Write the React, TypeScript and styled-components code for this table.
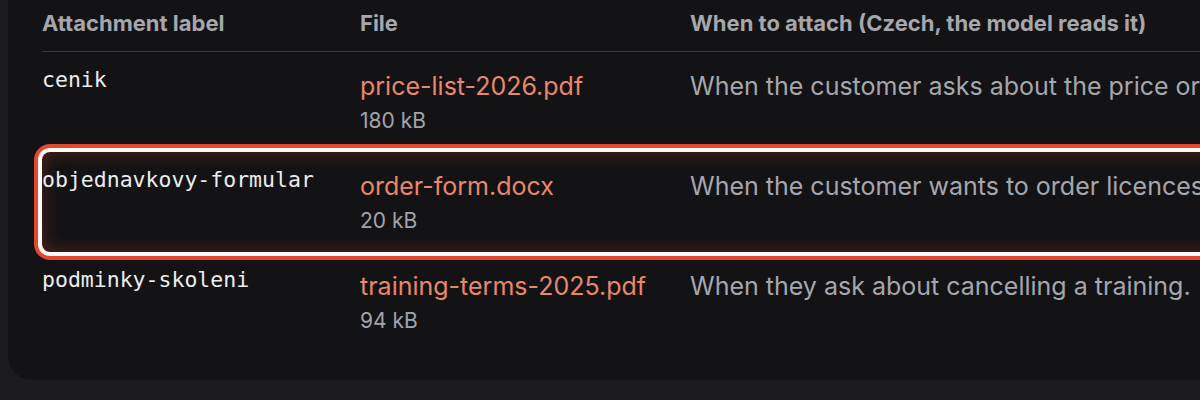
import React from "react"
import styled, { createGlobalStyle } from "styled-components"

interface Attachment {
  label: string
  file: string
  size: string
  when: string
  active?: boolean
}

const attachments: Attachment[] = [
  {
    label: "cenik",
    file: "price-list-2026.pdf",
    size: "180 kB",
    when: "When the customer asks about the price or the price list.",
  },
  {
    label: "objednavkovy-formular",
    file: "order-form.docx",
    size: "20 kB",
    when: "When the customer wants to order licences.",
    active: true,
  },
  {
    label: "podminky-skoleni",
    file: "training-terms-2025.pdf",
    size: "94 kB",
    when: "When they ask about cancelling a training.",
  },
]

const GlobalStyle = createGlobalStyle`
  html, body {
    margin: 0;
    padding: 0;
    background: #1c1c1f;
    overflow: hidden;
  }
  body {
    font-family: Inter, "Noto Sans", sans-serif;
  }
`

const Page = styled.div`
  width: 1200px;
  height: 400px;
  overflow: hidden;
  padding-left: 8px;
  box-sizing: border-box;
`

const Card = styled.div`
  width: 1400px;
  height: 380px;
  background: #131315;
  border-radius: 0 0 0 24px;
  padding: 0 0 0 34px;
  box-sizing: border-box;
`

const Row = styled.div<{ $active?: boolean }>`
  display: grid;
  grid-template-columns: 318px 330px 1fr;
  align-items: start;
  padding: 18px 0 14px;
  border-radius: 8px;
  ${({ $active }) =>
    $active &&
    `
    box-shadow:
      0 0 0 4px #fdfbfa,
      0 0 0 8px #e2492f,
      inset 0 0 18px rgba(226, 73, 47, 0.32);
  `}
`

const HeadRow = styled(Row)`
  padding: 10px 0 15px;
  border-bottom: 1px solid #38383c;
  border-radius: 0;
`

const HeadCell = styled.div`
  font-size: 22px;
  line-height: 26px;
  font-weight: 700;
  color: #a6a6ad;
  white-space: nowrap;
`

const Label = styled.div`
  font-family: "DejaVu Sans Mono", "Liberation Mono", monospace;
  font-size: 21.5px;
  line-height: 20px;
  color: #ececef;
  white-space: nowrap;
`

const FileCell = styled.div`
  display: flex;
  flex-direction: column;
`

const FileName = styled.span`
  font-size: 25px;
  line-height: 32px;
  color: #e8876a;
  white-space: nowrap;
`

const FileSize = styled.span`
  font-size: 21px;
  line-height: 34px;
  padding-top: 2px;
  color: #a3a3ab;
`

const When = styled.div`
  font-size: 25px;
  line-height: 32px;
  color: #a6a6ad;
  white-space: nowrap;
`

export default function App() {
  return (
    <>
      <GlobalStyle />
      <Page>
        <Card>
          <HeadRow>
            <HeadCell>Attachment label</HeadCell>
            <HeadCell>File</HeadCell>
            <HeadCell>When to attach (Czech, the model reads it)</HeadCell>
          </HeadRow>
          {attachments.map((a) => (
            <Row key={a.label} $active={a.active}>
              <Label>{a.label}</Label>
              <FileCell>
                <FileName>{a.file}</FileName>
                <FileSize>{a.size}</FileSize>
              </FileCell>
              <When>{a.when}</When>
            </Row>
          ))}
        </Card>
      </Page>
    </>
  )
}
